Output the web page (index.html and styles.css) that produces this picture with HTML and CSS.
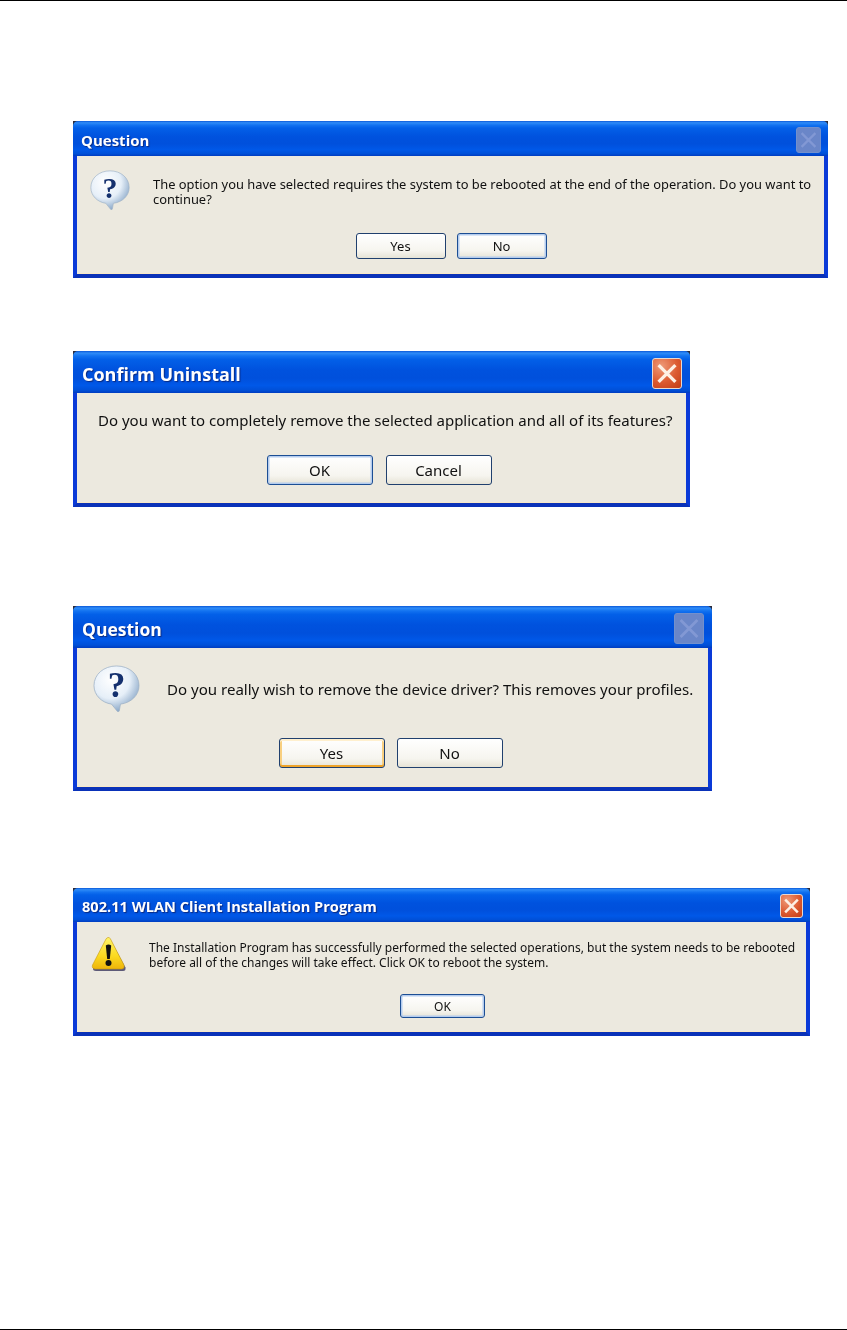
FILE: index.html
```html
<!DOCTYPE html>
<html>

	<head>
		<meta charset="UTF-8">
		<title>Uninstall dialogs</title>
		<link rel="stylesheet" href="styles.css">
	</head>

	<body>
		<div class="page">
			<div class="dialog d1">
				<div class="titlebar">
					<span class="title">Question</span>
					<span class="close off"><svg viewBox="0 0 20 20"><path d="M4 4L16 16M16 4L4 16" /></svg></span>
				</div>
				<div class="body">
					<div class="msg">
						<svg class="icon" viewBox="0 0 48 48">
							<defs>
								<radialGradient id="bubble" cx="38%" cy="30%" r="75%">
									<stop offset="0" stop-color="#ffffff" />
									<stop offset="0.55" stop-color="#e6eff8" />
									<stop offset="1" stop-color="#7f9fc2" />
								</radialGradient>
								<symbol id="ask" viewBox="0 0 48 48">
									<path d="M24 1C11 1 1 9.500 1 21C1 31 9 38.500 19 40L25 47.500C26 48 27 47.500 27 46L28 40C39 38.500 47 31 47 21C47 9.500 37 1 24 1Z" fill="url(#bubble)" stroke="#9fb2c6" stroke-width="0.8" />
									<text x="24" y="33" class="mark">?</text>
								</symbol>
							</defs>
							<use href="#ask" />
						</svg>
						<p class="text">The option you have selected requires the system to be rebooted at the end of the operation. Do you want to continue?</p>
					</div>
					<div class="buttons">
						<a class="btn">Yes</a>
						<a class="btn ring">No</a>
					</div>
				</div>
			</div>

			<div class="dialog d2">
				<div class="titlebar">
					<span class="title">Confirm Uninstall</span>
					<span class="close"><svg viewBox="0 0 20 20"><path d="M4 4L16 16M16 4L4 16" /></svg></span>
				</div>
				<div class="body">
					<div class="msg">
						<p class="text">Do you want to completely remove the selected application and all of its features?</p>
					</div>
					<div class="buttons">
						<a class="btn ring">OK</a>
						<a class="btn">Cancel</a>
					</div>
				</div>
			</div>

			<div class="dialog d3">
				<div class="titlebar">
					<span class="title">Question</span>
					<span class="close off"><svg viewBox="0 0 20 20"><path d="M4 4L16 16M16 4L4 16" /></svg></span>
				</div>
				<div class="body">
					<div class="msg">
						<svg class="icon" viewBox="0 0 48 48"><use href="#ask" /></svg>
						<p class="text">Do you really wish to remove the device driver? This removes your profiles.</p>
					</div>
					<div class="buttons">
						<a class="btn hot">Yes</a>
						<a class="btn">No</a>
					</div>
				</div>
			</div>

			<div class="dialog d4">
				<div class="titlebar">
					<span class="title">802.11 WLAN Client Installation Program</span>
					<span class="close"><svg viewBox="0 0 20 20"><path d="M4 4L16 16M16 4L4 16" /></svg></span>
				</div>
				<div class="body">
					<div class="msg">
						<svg class="icon" viewBox="0 0 36 36">
							<defs>
								<linearGradient id="warn" x1="0" y1="0" x2="0" y2="1">
									<stop offset="0" stop-color="#fff46a" />
									<stop offset="0.6" stop-color="#fbd91f" />
									<stop offset="1" stop-color="#eeb40a" />
								</linearGradient>
							</defs>
							<path d="M19 3L34.500 31.500Q35 35 32 35L5 35Q1.500 35 2 31.500Z" fill="#5d5a78" />
							<path d="M17 1.500Q18.500 1 19.500 3L33 29Q34 32.500 31 33L4 33Q0.500 32.500 1.500 29L15 3Q15.800 1.800 17 1.500Z" fill="url(#warn)" stroke="#c79a10" stroke-width="0.6" />
							<path d="M14.800 9.500Q17.500 7.500 20.200 9.500L18.800 23L16.200 23Z" fill="#111" />
							<circle cx="17.500" cy="27" r="3" fill="#111" />
						</svg>
						<p class="text">The Installation Program has successfully performed the selected operations, but the system needs to be rebooted before all of the changes will take effect. Click OK to reboot the system.</p>
					</div>
					<div class="buttons">
						<a class="btn ring">OK</a>
					</div>
				</div>
			</div>
		</div>
	</body>

</html>
```

FILE: styles.css
```css
* {
	margin: 0;
	padding: 0;
	box-sizing: border-box;
}

body {
	background: #fff;
}

.page {
	height: 1330px;
	border-top: 1px solid #000;
	border-bottom: 1px solid #000;
	display: flex;
	flex-direction: column;
	align-items: flex-start;
}

.dialog {
	margin-left: 73px;
	background: #2b2b3a;
	font-family: "Noto Sans", sans-serif;
	color: #111;
	filter: blur(0.45px);
}

.titlebar {
	display: flex;
	justify-content: space-between;
	align-items: center;
	border-radius: 5px 5px 0 0;
	background: linear-gradient(#0a58d8 0%, #2f8cf8 5%, #1272f0 12%, #0360e8 20%, #0052de 45%, #0050dc 65%, #0058e8 82%, #0050d8 93%, #003cc0 100%);
}

.title {
	color: #fff;
	font-family: "Open Sans", sans-serif;
	font-weight: 700;
	text-shadow: 1px 1px 1px #0a2a80;
}

.close {
	display: flex;
	align-items: center;
	justify-content: center;
	border: 1px solid #e8d8d0;
	border-radius: 3px;
	background: radial-gradient(circle at 30% 25%, #ee9a78, #dc5a30 55%, #c03c16);
}

.close svg {
	width: 100%;
	height: 100%;
	display: block;
}

.close path {
	fill: none;
	stroke: #fdf0e4;
	stroke-width: 2.400;
}

.close.off {
	background: #6a86c8;
	border-color: #7390cc;
}

.close.off path {
	stroke: #8298d4;
	stroke-width: 2;
}

.body {
	background: #ece9df;
	border: 4px solid #0a3ad8;
	border-top: 0;
	border-bottom-color: #0a32b8;
	box-shadow: inset 0 -1px 0 #f8e8c8;
}

.msg {
	display: flex;
}

.icon {
	flex: none;
	display: block;
}

.mark {
	font-family: "Liberation Serif", serif;
	font-weight: 700;
	font-size: 36px;
	fill: #14306e;
	text-anchor: middle;
}

.buttons {
	display: flex;
	justify-content: center;
}

.btn {
	display: flex;
	align-items: center;
	justify-content: center;
	border: 1px solid #20406e;
	border-radius: 3px;
	background: linear-gradient(#ffffff, #f6f5ef 70%, #e6e3d6);
}

.btn.ring {
	border-color: #1c4e94;
	box-shadow: inset 0 0 0 1.500px #b4ccee;
}

.btn.hot {
	box-shadow: inset 0 2px 0 #fff0cf, inset 0 -2px 0 #eda32a, inset 2px 0 0 #f8cf80, inset -2px 0 0 #f8cf80;
}

/* dialog 1 */
.d1 {
	width: 755px;
	margin-top: 120px;
}

.d1 .titlebar {
	height: 35px;
	padding: 3px 7px 0 8px;
}

.d1 .title {
	font-size: 15px;
}

.d1 .close {
	width: 25px;
	height: 26px;
}

.d1 .body {
	padding: 14px 0 15px 13px;
}

.d1 .icon {
	width: 40px;
	height: 40px;
}

.d1 .text {
	margin-left: 23px;
	padding-top: 7px;
	font-size: 12.900px;
	line-height: 15px;
	width: 672px;
}

.d1 .buttons {
	margin-top: 23px;
	gap: 11px;
	padding-right: 12px;
}

.d1 .btn {
	width: 90px;
	height: 26px;
	font-size: 13px;
}

/* dialog 2 */
.d2 {
	width: 617px;
	margin-top: 73px;
}

.d2 .titlebar {
	height: 42px;
	padding: 3px 8px 0 9px;
}

.d2 .title {
	font-size: 18px;
}

.d2 .close {
	width: 30px;
	height: 31px;
}

.d2 .body {
	padding: 18px 0 18px 21px;
}

.d2 .text {
	font-size: 15px;
	line-height: 18px;
}

.d2 .buttons {
	margin-top: 26px;
	gap: 13px;
	padding-right: 26px;
}

.d2 .btn {
	width: 106px;
	height: 30px;
	font-size: 15px;
}

/* dialog 3 */
.d3 {
	width: 639px;
	margin-top: 99px;
}

.d3 .titlebar {
	height: 42px;
	padding: 3px 8px 0 9px;
}

.d3 .title {
	font-size: 17.500px;
}

.d3 .close {
	width: 30px;
	height: 31px;
}

.d3 .body {
	padding: 17px 0 19px 16px;
}

.d3 .msg {
	align-items: center;
}

.d3 .icon {
	width: 47px;
	height: 47px;
}

.d3 .text {
	margin-left: 27px;
	font-size: 15.050px;
	line-height: 18px;
}

.d3 .buttons {
	margin-top: 26px;
	gap: 12px;
	padding-right: 20px;
}

.d3 .btn {
	width: 106px;
	height: 30px;
	font-size: 15px;
}

/* dialog 4 */
.d4 {
	width: 737px;
	margin-top: 97px;
}

.d4 .titlebar {
	height: 34px;
	padding: 2px 7px 0 9px;
}

.d4 .title {
	font-size: 14.600px;
}

.d4 .close {
	width: 23px;
	height: 24px;
}

.d4 .body {
	padding: 14px 0 14px 14px;
}

.d4 .icon {
	width: 36px;
	height: 36px;
}

.d4 .text {
	margin-left: 22px;
	padding-top: 4px;
	font-size: 12px;
	line-height: 15px;
	width: 660px;
}

.d4 .buttons {
	margin-top: 22px;
	padding-right: 12px;
}

.d4 .btn {
	width: 85px;
	height: 24px;
	font-size: 12px;
}
```
